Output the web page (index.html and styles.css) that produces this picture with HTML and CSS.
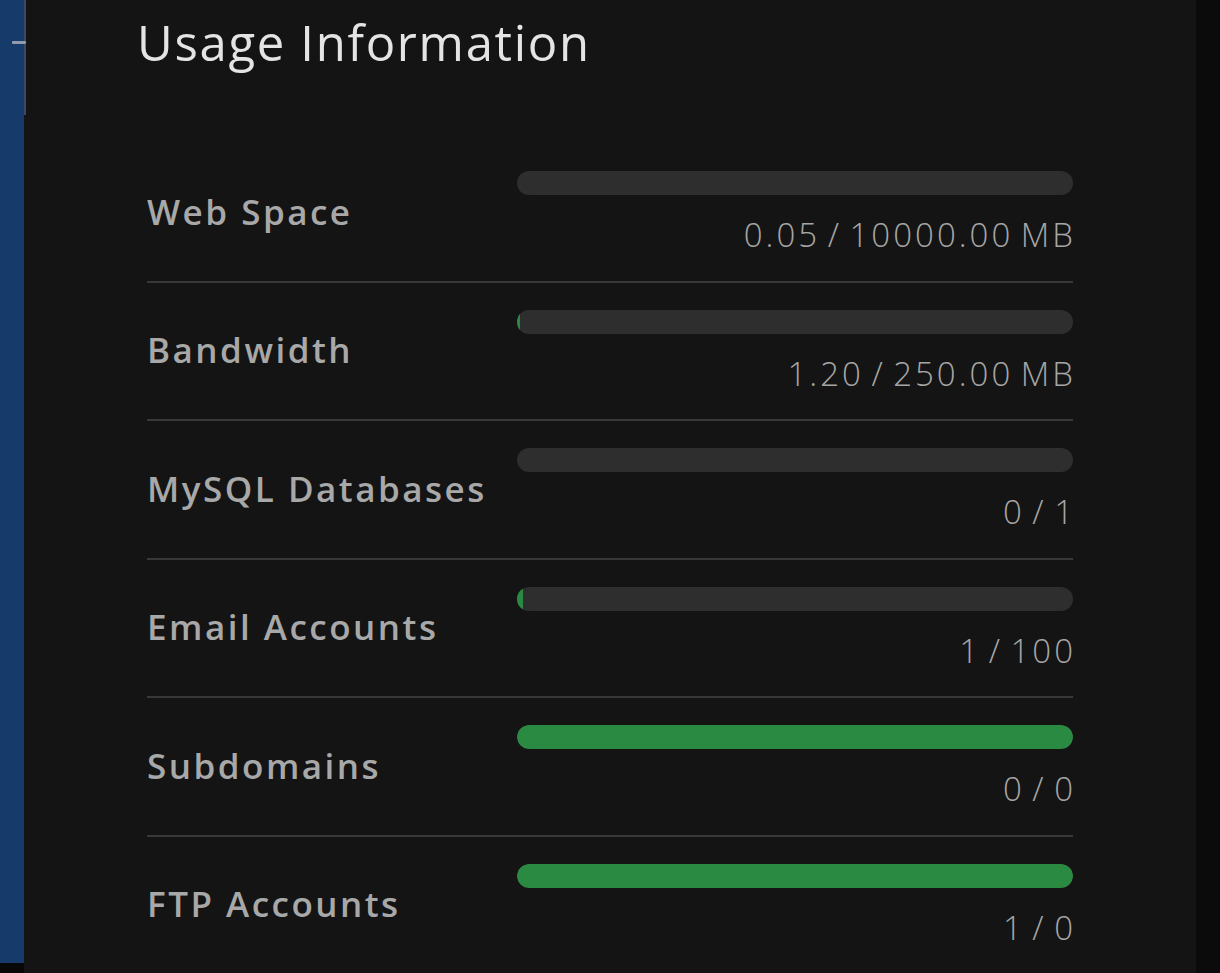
FILE: index.html
```html
<!DOCTYPE html>
<html lang="en">
<head>
<meta charset="utf-8">
<title>Usage Information</title>
<link rel="stylesheet" href="styles.css">
</head>
<body>
<div class="page">
  <aside class="sidebar">
    <div class="sidebar-top"><span class="dash"></span></div>
    <div class="sidebar-body"></div>
    <div class="sidebar-foot"></div>
  </aside>
  <main class="panel">
    <h1 class="title">Usage Information</h1>
    <div class="usage">
      <div class="row">
        <div class="label">Web Space</div>
        <div class="meter">
          <div class="track"><div class="fill" style="width:0%"></div></div>
          <div class="value">0.05 / 10000.00 MB</div>
        </div>
      </div>
      <div class="row">
        <div class="label">Bandwidth</div>
        <div class="meter">
          <div class="track"><div class="fill" style="width:0.48%"></div></div>
          <div class="value">1.20 / 250.00 MB</div>
        </div>
      </div>
      <div class="row">
        <div class="label">MySQL Databases</div>
        <div class="meter">
          <div class="track"><div class="fill" style="width:0%"></div></div>
          <div class="value">0 / 1</div>
        </div>
      </div>
      <div class="row">
        <div class="label">Email Accounts</div>
        <div class="meter">
          <div class="track"><div class="fill" style="width:1%"></div></div>
          <div class="value">1 / 100</div>
        </div>
      </div>
      <div class="row">
        <div class="label">Subdomains</div>
        <div class="meter">
          <div class="track"><div class="fill" style="width:100%"></div></div>
          <div class="value">0 / 0</div>
        </div>
      </div>
      <div class="row last">
        <div class="label">FTP Accounts</div>
        <div class="meter">
          <div class="track"><div class="fill" style="width:100%"></div></div>
          <div class="value">1 / 0</div>
        </div>
      </div>
    </div>
  </main>
  <div class="edge"></div>
</div>
</body>
</html>
```

FILE: styles.css
```css
* { box-sizing: border-box; }
html, body {
  margin: 0;
  padding: 0;
  height: 100%;
  background: #0b0b0b;
  overflow: hidden;
}
body {
  font-family: "Open Sans", "Liberation Sans", sans-serif;
}
.page {
  display: flex;
  width: 1220px;
  height: 973px;
}
.sidebar {
  width: 26px;
  display: flex;
  flex-direction: column;
  flex: none;
}
.sidebar-top {
  height: 115px;
  background: #163a6a;
  border-right: 2px solid #3a4a60;
  position: relative;
}
.dash {
  position: absolute;
  left: 12px;
  top: 41px;
  width: 14px;
  height: 3px;
  background: #8f9aaa;
  border-radius: 1px;
}
.sidebar-body {
  flex: 1;
  background: #163a6a;
  border-right: 2px solid #141414;
}
.sidebar-foot {
  height: 10px;
  background: #080808;
  border-right: 2px solid #141414;
}
.panel {
  flex: 1;
  background: #141414;
  padding-left: 111px;
  overflow: hidden;
}
.edge {
  width: 24px;
  flex: none;
  background: #0b0b0b;
}
.title {
  margin: 0;
  padding-top: 10px;
  font-size: 49px;
  line-height: 64px;
  font-weight: 400;
  color: #e4e4e4;
  letter-spacing: 1.7px;
}
.usage {
  margin-top: 70px;
  margin-left: 10px;
  width: 926px;
}
.row {
  display: flex;
  align-items: center;
  padding: 27px 0 25.5px;
  border-bottom: 2px solid #383838;
}
.row.last { border-bottom: none; }
.label {
  width: 370px;
  flex: none;
  padding-bottom: 3px;
  font-size: 35px;
  font-weight: 600;
  color: #a8a8a8;
  line-height: 40px;
  letter-spacing: 2.5px;
}
.meter {
  flex: 1;
  display: flex;
  flex-direction: column;
}
.track {
  height: 24px;
  border-radius: 12px;
  background: #2e2e2e;
  overflow: hidden;
}
.fill {
  height: 100%;
  background: #2a8a41;
  border-radius: 12px;
}
.value {
  margin-top: 20px;
  margin-right: -3px;
  text-align: right;
  font-size: 33px;
  font-weight: 300;
  line-height: 40px;
  color: #a6a6a6;
  letter-spacing: 3px;
  word-spacing: -4px;
}
```
